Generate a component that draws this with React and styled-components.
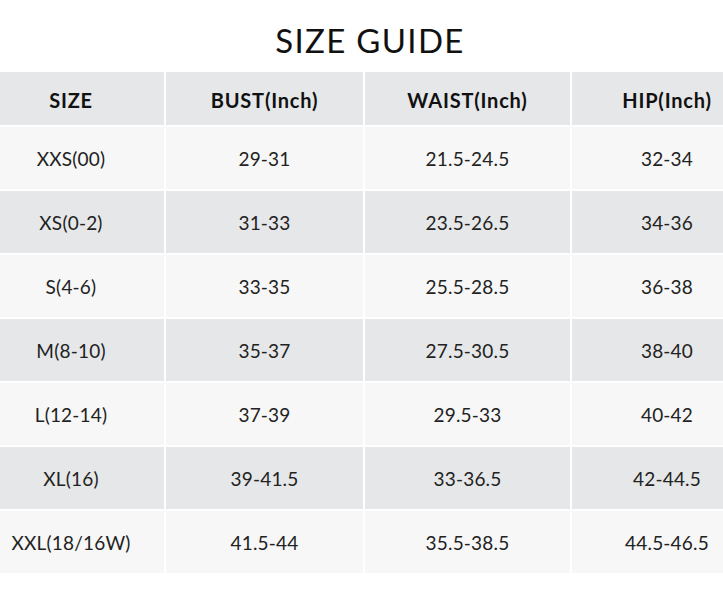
import React from 'react';
import styled, { createGlobalStyle } from 'styled-components';

// GLOBAL //
const GlobalStyle = createGlobalStyle`
  body {
    margin: 0;
    background: #ffffff;
    font-family: "Lato", "Open Sans", sans-serif;
    color: #222222;
  }
`;

// STYLED COMPONENTS //
const Page = styled.div`
  width: 723px;
  overflow: hidden;
`;

const Guide = styled.div`
  width: 784px;
  margin-left: -22px;
`;

const Title = styled.h1`
  margin: 0;
  padding-top: 20px;
  height: 72px;
  box-sizing: border-box;
  text-align: center;
  font-size: 33px;
  font-weight: 400;
  letter-spacing: 1.3px;
  line-height: 40px;
  color: #111111;
`;

const Grid = styled.div`
  display: grid;
  grid-template-columns: 186px 197px 205px 190px;
  gap: 2px;
`;

const Cell = styled.div`
  display: flex;
  align-items: center;
  justify-content: center;
  height: ${(p) => (p.$head ? '53px' : '62px')};
  padding-top: ${(p) => (p.$head ? '2px' : '0')};
  box-sizing: border-box;
  background: ${(p) => (p.$shade ? '#e6e7e8' : '#f7f7f7')};
  font-size: ${(p) => (p.$head ? '20px' : '19px')};
  font-weight: ${(p) => (p.$head ? 700 : 400)};
  letter-spacing: ${(p) => (p.$head ? '0.8px' : '0.2px')};
  color: ${(p) => (p.$head ? '#111111' : '#222222')};
`;

const heads = ['SIZE', 'BUST(Inch)', 'WAIST(Inch)', 'HIP(Inch)'];

const rows = [
  ['XXS(00)', '29-31', '21.5-24.5', '32-34'],
  ['XS(0-2)', '31-33', '23.5-26.5', '34-36'],
  ['S(4-6)', '33-35', '25.5-28.5', '36-38'],
  ['M(8-10)', '35-37', '27.5-30.5', '38-40'],
  ['L(12-14)', '37-39', '29.5-33', '40-42'],
  ['XL(16)', '39-41.5', '33-36.5', '42-44.5'],
  ['XXL(18/16W)', '41.5-44', '35.5-38.5', '44.5-46.5'],
];

export default function App() {
  return (
    <Page>
      <GlobalStyle />
      <Guide>
        <Title>SIZE GUIDE</Title>
        <Grid>
          {heads.map((h) => (
            <Cell key={h} $head $shade>{h}</Cell>
          ))}
          {rows.map((row, i) =>
            row.map((val, j) => (
              <Cell key={i + '-' + j} $shade={i % 2 === 1}>{val}</Cell>
            ))
          )}
        </Grid>
      </Guide>
    </Page>
  );
}
